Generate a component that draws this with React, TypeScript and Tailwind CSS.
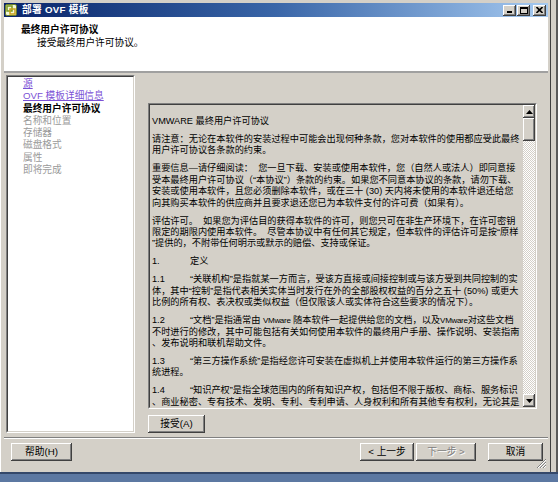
import React from 'react';

// classic 3D bevels
const raised =
  'bg-[#d4d0c8] shadow-[inset_-1px_-1px_#404040,inset_1px_1px_#ffffff,inset_-2px_-2px_#808080,inset_2px_2px_#d4d0c8]';
const sunkenOuter = 'border border-t-[#808080] border-l-[#808080] border-b-white border-r-white';
const sunkenInner = 'border border-t-[#404040] border-l-[#404040] border-b-[#d4d0c8] border-r-[#d4d0c8]';

type Section = { num?: string; lines: string[] };

const licence: Section[] = [
  { lines: ['VMWARE 最终用户许可协议'] },
  {
    lines: [
      '请注意：无论在本软件的安装过程中可能会出现何种条款，您对本软件的使用都应受此最终',
      '用户许可协议各条款的约束。',
    ],
  },
  {
    lines: [
      '重要信息—请仔细阅读：  您一旦下载、安装或使用本软件，您（自然人或法人）即同意接',
      '受本最终用户许可协议（“本协议”）条款的约束。如果您不同意本协议的条款，请勿下载、',
      '安装或使用本软件，且您必须删除本软件，或在三十 (30) 天内将未使用的本软件退还给您',
      '向其购买本软件的供应商并且要求退还您已为本软件支付的许可费（如果有）。',
    ],
  },
  {
    lines: [
      '评估许可。  如果您为评估目的获得本软件的许可，则您只可在非生产环境下，在许可密钥',
      '限定的期限内使用本软件。  尽管本协议中有任何其它规定，但本软件的评估许可是按“原样',
      '”提供的，不附带任何明示或默示的赔偿、支持或保证。',
    ],
  },
  { num: '1.', lines: ['定义'] },
  {
    num: '1.1',
    lines: [
      '“关联机构”是指就某一方而言，受该方直接或间接控制或与该方受到共同控制的实',
      '体，其中“控制”是指代表相关实体当时发行在外的全部股权权益的百分之五十 (50%) 或更大',
      '比例的所有权、表决权或类似权益（但仅限该人或实体符合这些要求的情况下）。',
    ],
  },
  {
    num: '1.2',
    lines: [
      '“文档”是指通常由 VMware 随本软件一起提供给您的文档，以及VMware对这些文档',
      '不时进行的修改，其中可能包括有关如何使用本软件的最终用户手册、操作说明、安装指南',
      '、发布说明和联机帮助文件。',
    ],
  },
  {
    num: '1.3',
    lines: ['“第三方操作系统”是指经您许可安装在虚拟机上并使用本软件运行的第三方操作系', '统进程。'],
  },
  {
    num: '1.4',
    lines: [
      '“知识产权”是指全球范围内的所有知识产权，包括但不限于版权、商标、服务标识',
      '、商业秘密、专有技术、发明、专利、专利申请、人身权利和所有其他专有权利，无论其是',
    ],
  },
];

const steps = [
  { label: '源', kind: 'done' },
  { label: 'OVF 模板详细信息', kind: 'done' },
  { label: '最终用户许可协议', kind: 'current' },
  { label: '名称和位置', kind: 'todo' },
  { label: '存储器', kind: 'todo' },
  { label: '磁盘格式', kind: 'todo' },
  { label: '属性', kind: 'todo' },
  { label: '即将完成', kind: 'todo' },
];

// the product name is set in a narrower face inside the running text
const renderLine = (line: string) =>
  line.split('VMware').map((part, k) => (
    <React.Fragment key={k}>
      {k > 0 && <span className="text-[8px] tracking-[-0.3px]">VMware</span>}
      {part}
    </React.Fragment>
  ));

const Arrow = ({ up }: { up?: boolean }) => (
  <svg width="7" height="4" viewBox="0 0 7 4">
    <path d={up ? 'M0 4 L3.5 0 L7 4 Z' : 'M0 0 L3.5 4 L7 0 Z'} fill="#000" />
  </svg>
);

const CaptionButton = ({ children }: { children: React.ReactNode }) => (
  <div className={`w-[13px] h-[11px] flex items-center justify-center ${raised}`}>{children}</div>
);

const Button = ({ label, w, disabled }: { label: string; w: string; disabled?: boolean }) => (
  <div
    className={`${w} h-[18px] flex items-center justify-center ${raised} ${
      disabled ? 'text-[#808080] [text-shadow:1px_1px_0_#ffffff]' : 'text-black'
    }`}
  >
    {label}
  </div>
);

export default function App() {
  return (
    <div className="w-[558px] h-[482px] bg-[#d4d0c8] flex flex-col overflow-hidden font-['Liberation_Sans','Noto_Sans_CJK_SC',sans-serif] text-[9.7px] leading-[11.4px] text-black">
      <div className="flex h-[472px]">
        {/* wizard window */}
        <div className="relative w-[551px] h-full flex flex-col p-[3px] pr-[2px] border-r border-[#404040] border-l border-l-white">
          <div className="h-[14px] flex items-center bg-linear-to-r from-[#0a246a] via-[#3a66a8] to-[#a6caf0] pl-[1px] pr-[1px]">
            <svg width="12" height="12" viewBox="0 0 12 12" className="shrink-0">
              <rect x="0.5" y="0.5" width="11" height="11" rx="1.5" fill="#f2f7d8" stroke="#6b7f2a" />
              <rect x="2" y="2" width="5" height="5" fill="none" stroke="#7a9a1e" strokeWidth="1.5" />
              <rect x="5" y="5" width="5" height="5" fill="none" stroke="#c9a21a" strokeWidth="1.5" />
            </svg>
            <span className="ml-[5px] text-white font-bold tracking-[0.3px]">部署 OVF 模板</span>
            <div className="ml-auto flex items-center gap-[1px] mr-[1px]">
              <CaptionButton>
                <svg width="6" height="6" viewBox="0 0 6 6">
                  <rect x="0" y="4" width="5" height="2" fill="#000" />
                </svg>
              </CaptionButton>
              <CaptionButton>
                <svg width="8" height="7" viewBox="0 0 8 7">
                  <rect x="0.5" y="0.5" width="7" height="6" fill="none" stroke="#000" />
                  <rect x="0" y="0" width="8" height="2" fill="#000" />
                </svg>
              </CaptionButton>
              <div className="ml-[2px]">
                <CaptionButton>
                  <svg width="7" height="6" viewBox="0 0 7 6">
                    <path d="M0.5 0 L6.5 6 M6.5 0 L0.5 6" stroke="#000" strokeWidth="1.6" />
                  </svg>
                </CaptionButton>
              </div>
            </div>
          </div>

          <div className="h-[56px] bg-white border-b-2 border-b-[#a0a0a0] pl-[17px] pt-[7px]">
            <div className="font-bold">最终用户许可协议</div>
            <div className="pl-[16px] mt-[1.6px]">接受最终用户许可协议。</div>
          </div>

          <div className="flex-1 flex flex-col">
            <div className="flex h-[360px] pt-[2px]">
              <div className={`ml-[2px] w-[129px] h-[358px] ${sunkenOuter}`}>
                <div className={`h-full bg-white pl-[15px] pt-[1px] leading-[12.3px] ${sunkenInner}`}>
                  {steps.map((s) => (
                    <div
                      key={s.label}
                      className={
                        s.kind === 'done'
                          ? 'text-[#7b52d6] underline'
                          : s.kind === 'current'
                          ? 'font-bold text-black'
                          : 'text-[#9a9a9a]'
                      }
                    >
                      {s.label}
                    </div>
                  ))}
                </div>
              </div>

              <div className="pl-[13px] pt-[28px] flex flex-col">
                <div className={`w-[389px] h-[306px] ${sunkenOuter}`}>
                  <div className={`h-full flex ${sunkenInner}`}>
                    <div className="flex-1 overflow-hidden pl-[2px] pt-[11px] whitespace-pre text-[9.2px]">
                      {licence.map((sec, i) => (
                        <div key={i} className="mb-[6.6px]">
                          {sec.lines.map((line, j) => (
                            <div key={j}>
                              {j === 0 && sec.num && <span className="inline-block w-[38px]">{sec.num}</span>}
                              {renderLine(line)}
                            </div>
                          ))}
                        </div>
                      ))}
                    </div>
                    <div className="w-[12px] flex flex-col">
                      <div className={`h-[13px] flex items-center justify-center ${raised}`}>
                        <Arrow up />
                      </div>
                      <div className={`h-[23px] ${raised}`} />
                      <div className="flex-1 bg-[repeating-conic-gradient(#ffffff_0_25%,#d4d0c8_0_50%)] bg-size-[2px_2px]" />
                      <div className={`h-[13px] flex items-center justify-center ${raised}`}>
                        <Arrow />
                      </div>
                    </div>
                  </div>
                </div>
                <div className="mt-[6px]">
                  <Button label="接受(A)" w="w-[57px]" />
                </div>
              </div>
            </div>

            <div className="mt-[4px] h-[2px] border-t border-t-[#808080] border-b border-b-white" />

            <div className="mt-[4px] flex items-center">
              <div className="ml-[7px]">
                <Button label="帮助(H)" w="w-[61px]" />
              </div>
              <div className="ml-auto flex items-center">
                <Button label="< 上一步" w="w-[54px]" />
                <div className="ml-[2px]">
                  <Button label="下一步 >" w="w-[60px]" disabled />
                </div>
                <div className="ml-[12px] mr-[5px]">
                  <Button label="取消" w="w-[55px]" />
                </div>
              </div>
            </div>
          </div>

          {/* resize grip */}
          <svg width="11" height="11" viewBox="0 0 11 11" className="absolute right-[3px] bottom-[3px]">
            <path d="M10 1 L1 10 M10 4 L4 10 M10 7 L7 10" stroke="#808080" strokeWidth="1" />
            <path d="M10 2 L2 10 M10 5 L5 10 M10 8 L8 10" stroke="#ffffff" strokeWidth="1" />
          </svg>
        </div>
        <div className="flex-1 bg-[#d4d0c8] border-r-2 border-[#5a5a5a]" />
      </div>
      <div className="h-[10px] bg-[#5c78a2] border-t-2 border-t-[#34486a]" />
    </div>
  );
}
